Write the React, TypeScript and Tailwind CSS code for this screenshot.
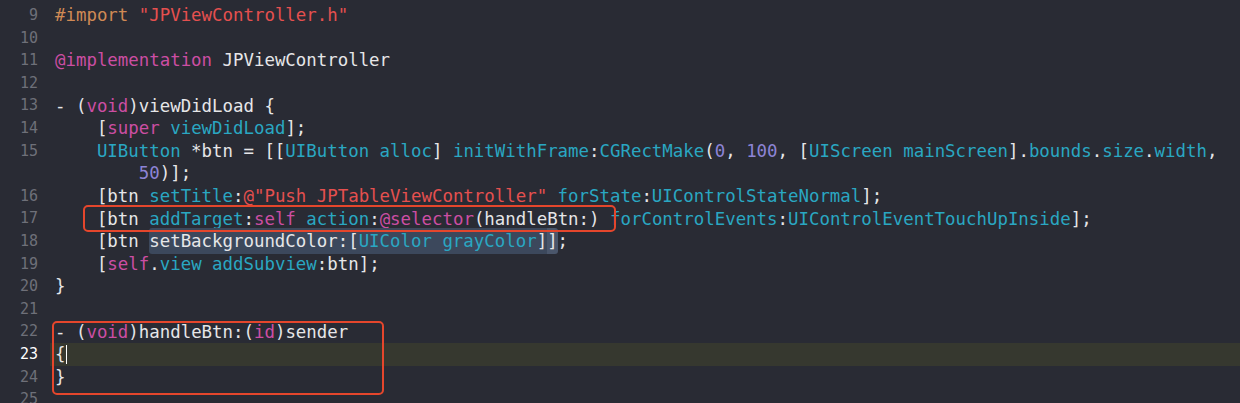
import React from 'react';

type Tok = [string, string];

const C: Record<string, string> = {
  p: 'text-[#e6e6e8]',
  k: 'text-[#cc4ea3]',
  s: 'text-[#e5504f]',
  n: 'text-[#8d84d6]',
  t: 'text-[#2aa7c2]',
  o: 'text-[#d08a55]',
  sel: 'text-[#e6e6e8] bg-[#3c485c] rounded-l-[3px] py-[2px]',
  selEnd: 'text-[#e6e6e8] bg-[#4a566b] rounded-r-[3px] py-[2px]',
  selT: 'text-[#2aa7c2] bg-[#3c485c] py-[2px]',
  selP: 'text-[#e6e6e8] bg-[#3c485c] py-[2px]',
};

interface Row {
  num?: number;
  toks: Tok[];
  current?: boolean;
}

const rows: Row[] = [
  { num: 9, toks: [['o', '#import '], ['s', '"JPViewController.h"']] },
  { num: 10, toks: [] },
  { num: 11, toks: [['k', '@implementation'], ['p', ' JPViewController']] },
  { num: 12, toks: [] },
  { num: 13, toks: [['p', '- ('], ['k', 'void'], ['p', ')viewDidLoad {']] },
  { num: 14, toks: [['p', '    ['], ['k', 'super'], ['p', ' '], ['t', 'viewDidLoad'], ['p', '];']] },
  {
    num: 15,
    toks: [
      ['t', '    UIButton'], ['p', ' *btn = [['], ['t', 'UIButton'], ['p', ' '], ['t', 'alloc'], ['p', '] '],
      ['t', 'initWithFrame'], ['p', ':'], ['t', 'CGRectMake'], ['p', '('], ['n', '0'], ['p', ', '], ['n', '100'],
      ['p', ', ['], ['t', 'UIScreen'], ['p', ' '], ['t', 'mainScreen'], ['p', '].'], ['t', 'bounds'], ['p', '.'],
      ['t', 'size'], ['p', '.'], ['t', 'width'], ['p', ','],
    ],
  },
  { toks: [['p', '        '], ['n', '50'], ['p', ')];']] },
  {
    num: 16,
    toks: [
      ['p', '    [btn '], ['t', 'setTitle'], ['p', ':'], ['s', '@"Push JPTableViewController"'], ['p', ' '],
      ['t', 'forState'], ['p', ':'], ['t', 'UIControlStateNormal'], ['p', '];'],
    ],
  },
  {
    num: 17,
    toks: [
      ['p', '    [btn '], ['t', 'addTarget'], ['p', ':'], ['k', 'self'], ['p', ' '], ['t', 'action'], ['p', ':'],
      ['k', '@selector'], ['p', '(handleBtn:) '], ['t', 'forControlEvents'], ['p', ':'],
      ['t', 'UIControlEventTouchUpInside'], ['p', '];'],
    ],
  },
  {
    num: 18,
    toks: [
      ['p', '    [btn '], ['sel', 'setBackgroundColor:['], ['selT', 'UIColor grayColor'], ['selP', ']'],
      ['selEnd', ']'], ['p', ';'],
    ],
  },
  {
    num: 19,
    toks: [
      ['p', '    ['], ['k', 'self'], ['p', '.'], ['t', 'view'], ['p', ' '], ['t', 'addSubview'], ['p', ':btn];'],
    ],
  },
  { num: 20, toks: [['p', '}']] },
  { num: 21, toks: [] },
  { num: 22, toks: [['p', '- ('], ['k', 'void'], ['p', ')handleBtn:('], ['k', 'id'], ['p', ')sender']] },
  { num: 23, toks: [['p', '{']], current: true },
  { num: 24, toks: [['p', '}']] },
  { num: 25, toks: [] },
];

export default function App() {
  return (
    <div
      className="relative w-[1240px] h-[403px] overflow-hidden bg-[#292b34] pt-[4px] flex flex-col"
      style={{ fontFamily: '"DejaVu Sans Mono", "Liberation Mono", monospace' }}
    >
      {rows.map((row, i) => (
        <div key={i} className="flex h-[22.6px] shrink-0">
          <div
            className={`w-[50px] pr-[12px] text-right text-[15px] leading-[22.6px] ${
              row.current ? 'text-white' : 'text-[#6e7079]'
            }`}
          >
            {row.num ?? ''}
          </div>
          <div
            className={`flex-1 flex items-center pl-[5px] whitespace-pre text-[17.4px] leading-[22px] ${
              row.current ? 'bg-[#36382f]' : ''
            }`}
          >
            {row.toks.map(([c, s], j) => (
              <span key={j} className={C[c]}>
                {s}
              </span>
            ))}
            {row.current && <span className="w-[1.5px] h-[19px] bg-white ml-[0.5px]" />}
          </div>
        </div>
      ))}

      {/* annotation boxes drawn over the code */}
      <div className="absolute left-[83px] top-[205px] w-[533px] h-[27px] rounded-[5px] border-[2.5px] border-[#e5462c]" />
      <div className="absolute left-[52px] top-[321px] w-[332px] h-[74px] rounded-[5px] border-[2.5px] border-[#e5462c]" />
    </div>
  );
}
